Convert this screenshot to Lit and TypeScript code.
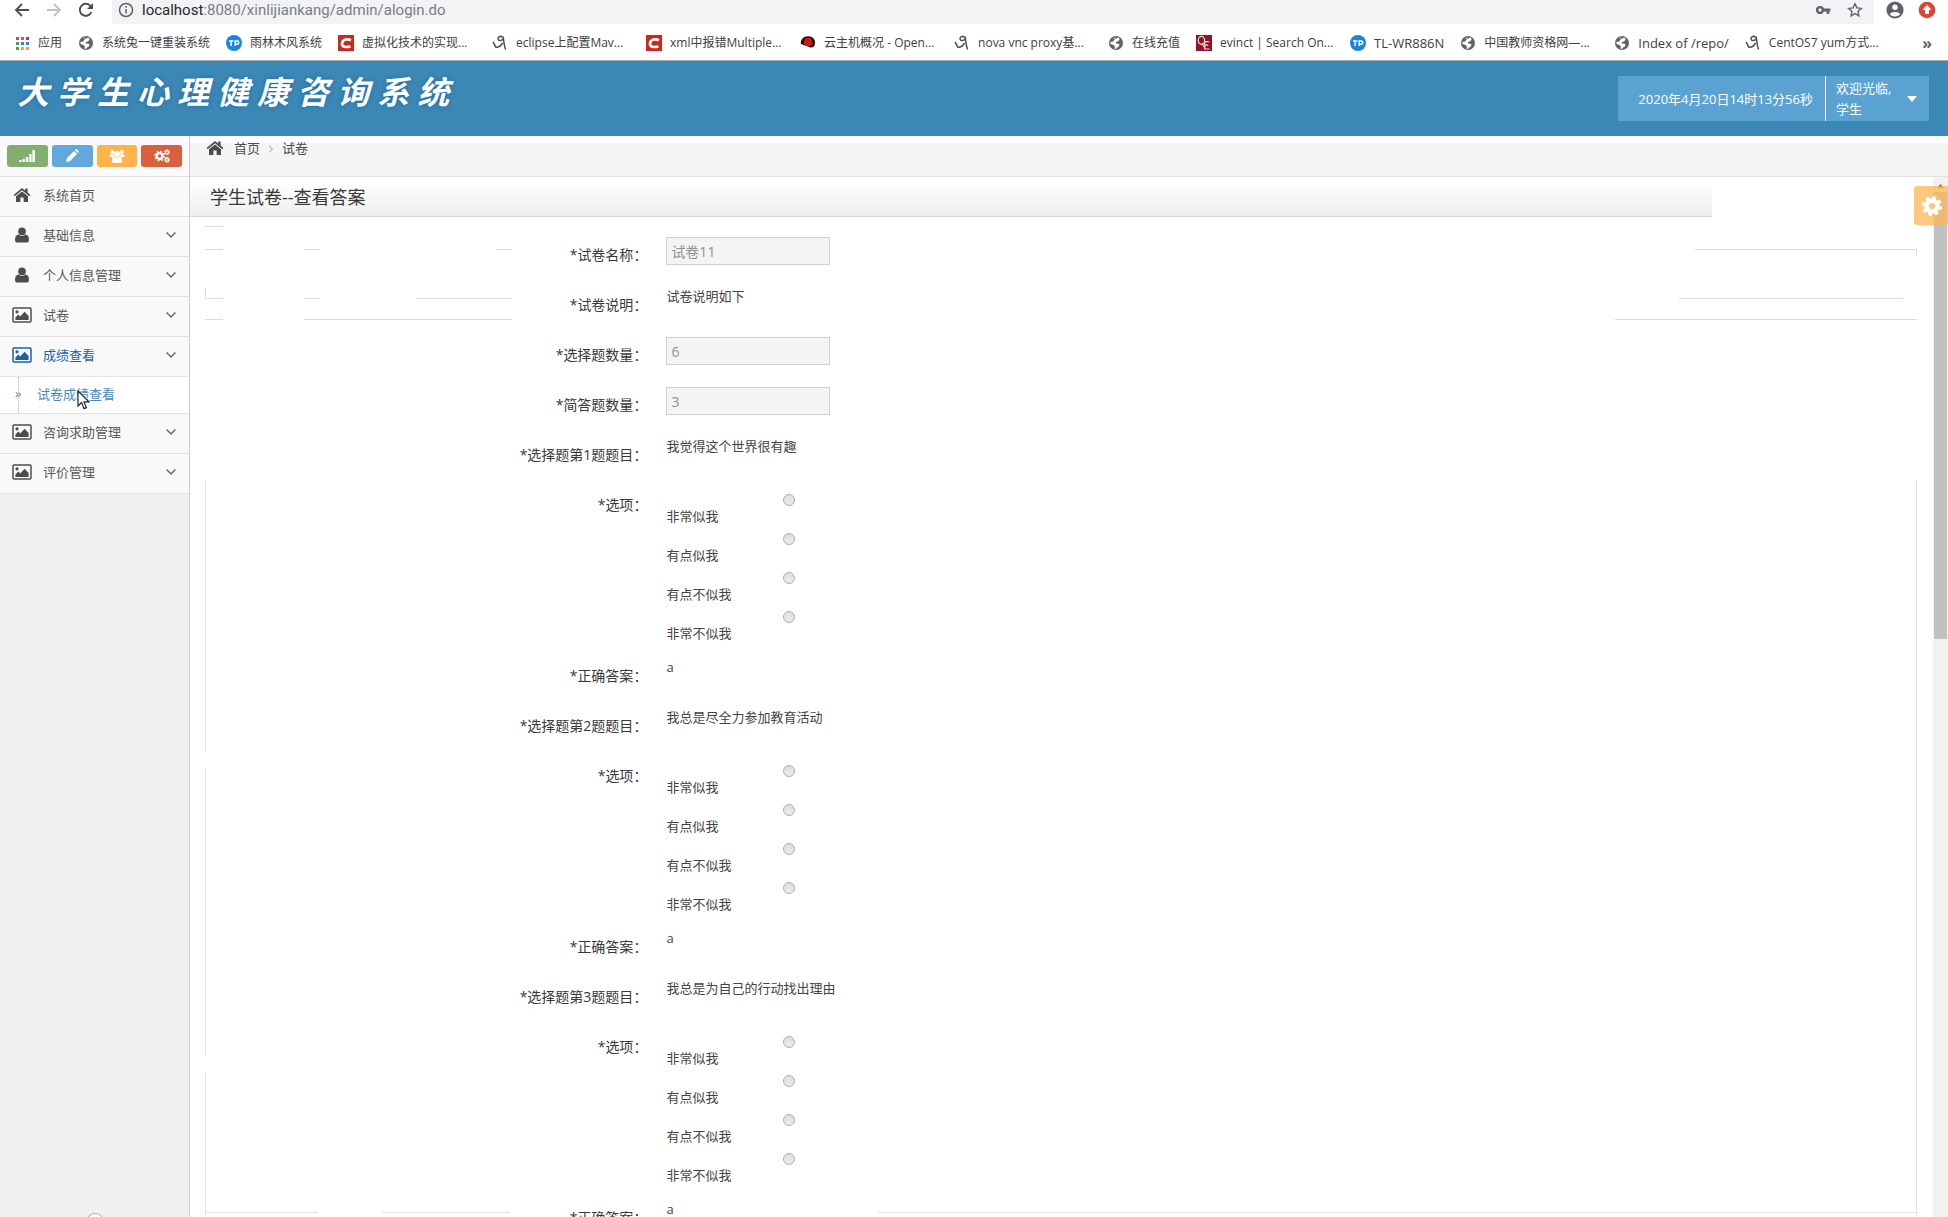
import { LitElement, html, css, svg, nothing, TemplateResult } from "lit";
import { customElement, property } from "lit/decorators.js";
import { classMap } from "lit/directives/class-map.js";

const icons: Record<string, TemplateResult> = {
  apps: html`<svg viewBox="0 0 16 16" width="16" height="16">
    ${[2, 7, 12].map((y, r) =>
      [2, 7, 12].map(
        (x, c) => svg`<rect x=${x} y=${y} width="3" height="3" fill=${
          [["#e0443e", "#d9534f", "#c0392b"], ["#4a9a4a", "#3b7ddd", "#3b7ddd"], ["#4a9a4a", "#f0a830", "#f0a830"]][r][c]
        }></rect>`
      )
    )}
  </svg>`,
  globe: html`<svg viewBox="0 0 16 16" width="16" height="16">
    <circle cx="8" cy="8" r="7" fill="#5f6368"></circle>
    <path d="M2.600 6.400C4 7.400 5.400 6.600 6 5.200 6.600 3.800 8 3.800 9.400 3L11 2.600 11.600 5 9.600 6.400 7.600 7.200 8.400 8.600 11.400 9 11 11.400 8.600 12.800 8 14 6.400 13.600 7 11.400 5 9.800 2.400 9z" fill="#fff"></path>
    <path d="M5 2.600 8 1.600 7.600 3.400 5.600 4.600z" fill="#fff" opacity="0.300"></path>
  </svg>`,
  tp: html`<svg viewBox="0 0 16 16" width="16" height="16">
    <circle cx="8" cy="8" r="8" fill="#1a86e0"></circle>
    <path d="M3 6h4.400M5.200 6v5M9.200 11V6h2a1.600 1.600 0 0 1 0 3.200h-2" fill="none" stroke="#fff" stroke-width="1.500"></path>
  </svg>`,
  cmark: html`<svg viewBox="0 0 16 16" width="16" height="16">
    <rect width="16" height="16" fill="#c92a1c"></rect>
    <path d="M13 5.200C9.600 3.600 4.600 4.200 4 8.300 3.600 12 8.200 12.900 12.400 11.200" fill="none" stroke="#fff" stroke-width="2.600"></path>
  </svg>`,
  sa: html`<svg viewBox="0 0 16 16" width="16" height="16">
    <path d="M1 7c1 1.200 1.600 3.600 3 5.200C6.500 12.600 9 10.500 10.600 8M10.600 2.200C8.600.4 5.600 2 6.200 4.200c.6 2 4 1.800 4.800-.4M11.200 1.600c.4 4.200.8 8.600 2.400 13" fill="none" stroke="#4a4d50" stroke-width="1.500"></path>
  </svg>`,
  hat: html`<svg viewBox="0 0 16 16" width="16" height="16">
    <path d="M1 9C0 4.500 4 1 8.400 1.200 13 1.400 16 5 14.800 9.600 14.400 12 12 13 10.400 12.400z" fill="#111"></path>
    <path d="M3.600 8.200C4 5.400 4.600 2.800 6.600 3c1.400-.6 3.400-.4 4.400.6 1.200 1.600 1.600 4 1.400 6.200C10.400 12.400 5 11 3.600 8.200z" fill="#d8140c"></path>
  </svg>`,
  qe: html`<svg viewBox="0 0 16 16" width="16" height="16">
    <rect width="16" height="16" fill="#8f1626"></rect>
    <ellipse cx="5.400" cy="5.400" rx="3.200" ry="4" fill="none" stroke="#f3dfe1" stroke-width="1.200"></ellipse>
    <path d="M6 8.400 8.200 12M13.200 6.600H8.800v7.400h4.600M8.800 10.200h3.400" fill="none" stroke="#f3dfe1" stroke-width="1.200"></path>
  </svg>`,
  home: html`<svg viewBox="0 0 18 16" width="18" height="16" fill="currentColor">
    <path d="M9 1 .6 8l1 1.200L9 3.200l7.400 6 1-1.200-2.800-2.400V1.600h-2.400v2z"></path>
    <path d="M9 4.400 3 9.200V15h4.400v-4.400h3.200V15H15V9.200z"></path>
  </svg>`,
  user: html`<svg viewBox="0 0 16 16" width="16" height="16" fill="currentColor">
    <circle cx="8" cy="4.400" r="3.800"></circle>
    <path d="M1 13c0-3.400 1.200-5.200 3.600-5.400 2 1.800 4.800 1.800 6.800 0C13.800 7.800 15 9.600 15 13c0 1.600-1 2.600-2.400 2.600H3.400C2 15.600 1 14.600 1 13z"></path>
  </svg>`,
  picture: html`<svg viewBox="0 0 20 16" width="20" height="16">
    <rect x="1" y="1" width="18" height="14" rx="1" fill="none" stroke="currentColor" stroke-width="1.500"></rect>
    <circle cx="5" cy="4.800" r="1.600" fill="currentColor"></circle>
    <path d="M3.400 13v-2.400L6.400 7.600l1.800 1.800 4.400-4.600 4 4.200v4z" fill="currentColor"></path>
  </svg>`,
  chevron: html`<svg viewBox="0 0 10 6" width="10" height="6"><path d="M.6.6 5 5 9.400.6" fill="none" stroke="#666" stroke-width="1.400"></path></svg>`,
  signal: html`<svg viewBox="0 0 16 14" width="16" height="14" fill="currentColor"><path d="M0 11h2.400v2H0zM3.400 10h2.400v3H3.400zM6.800 8h2.400v5H6.800zM10.200 5h2.400v8h-2.400zM13.400 1h2.400v12h-2.400z"></path></svg>`,
  pencil: html`<svg viewBox="0 0 14 14" width="14" height="14" fill="currentColor"><path d="M1 13l.8-3.800L9 2l3 3-7.200 7.200zM9.800 1.200 10.600.6c.6-.5 1.200-.4 1.700.1l1 1c.5.5.5 1.100 0 1.700l-.6.700z"></path></svg>`,
  group: html`<svg viewBox="0 0 16 14" width="16" height="14" fill="currentColor">
    <circle cx="3.400" cy="3" r="2"></circle><circle cx="12.600" cy="3" r="2"></circle><circle cx="8" cy="5" r="3"></circle>
    <path d="M.2 8C.2 6 1 5.200 2 5.200h2.400L5 8zM15.800 8c0-2-.8-2.800-1.800-2.800h-2.400L11 8zM2.800 12c0-3 1-4.400 2.800-4.400 1.400 1.200 3.400 1.200 4.800 0 1.800 0 2.800 1.400 2.800 4.400 0 1.200-.8 2-2 2H4.800c-1.200 0-2-.8-2-2z"></path>
  </svg>`,
  cogs: html`<svg viewBox="0 0 16 14" width="16" height="14" fill="none" stroke="currentColor">
    <circle cx="5.600" cy="7" r="2.900" stroke-width="2.200"></circle><circle cx="5.600" cy="7" r="4.700" stroke-width="1.400" stroke-dasharray="1.900 1.790"></circle>
    <circle cx="13" cy="3.200" r="1.600" stroke-width="1.400"></circle><circle cx="13" cy="3.200" r="2.500" stroke-width="1" stroke-dasharray="1 .96"></circle>
    <circle cx="13" cy="10.800" r="1.600" stroke-width="1.400"></circle><circle cx="13" cy="10.800" r="2.500" stroke-width="1" stroke-dasharray="1 .96"></circle>
  </svg>`,
  cog: html`<svg viewBox="0 0 22 22" width="22" height="22" fill="none" stroke="#fff">
    <circle cx="11" cy="11" r="5.400" stroke-width="4.600"></circle><circle cx="11" cy="11" r="8.800" stroke-width="2.600" stroke-dasharray="3.900 3.010"></circle>
  </svg>`,
};

interface Bookmark { icon: string; text: string; wide?: boolean; latin?: boolean }
const bookmarks: Bookmark[] = [
  { icon: "apps", text: "应用" },
  { icon: "globe", text: "系统兔一键重装系统" },
  { icon: "tp", text: "雨林木风系统" },
  { icon: "cmark", text: "虚拟化技术的实现...", wide: true },
  { icon: "sa", text: "eclipse上配置Mav...", wide: true },
  { icon: "cmark", text: "xml中报错Multiple...", wide: true },
  { icon: "hat", text: "云主机概况 - Open...", wide: true },
  { icon: "sa", text: "nova vnc proxy基...", wide: true },
  { icon: "globe", text: "在线充值" },
  { icon: "qe", text: "evinct | Search On...", wide: true },
  { icon: "tp", text: "TL-WR886N", latin: true },
  { icon: "globe", text: "中国教师资格网—...", wide: true },
  { icon: "globe", text: "Index of /repo/", latin: true },
  { icon: "sa", text: "CentOS7 yum方式...", wide: true },
];

interface MenuEntry { icon: string; text: string; plain?: boolean; child?: string }
const menu: MenuEntry[] = [
  { icon: "home", text: "系统首页", plain: true },
  { icon: "user", text: "基础信息" },
  { icon: "user", text: "个人信息管理" },
  { icon: "picture", text: "试卷" },
  { icon: "picture", text: "成绩查看", child: "试卷成绩查看" },
  { icon: "picture", text: "咨询求助管理" },
  { icon: "picture", text: "评价管理" },
];

const choices = ["非常似我", "有点似我", "有点不似我", "非常不似我"];
const questions = [
  { title: "我觉得这个世界很有趣", answer: "a" },
  { title: "我总是尽全力参加教育活动", answer: "a" },
  { title: "我总是为自己的行动找出理由", answer: "a" },
];

const base = css`
  * { box-sizing: border-box; }
  svg { display: block; flex: none; }
  a { color: inherit; text-decoration: none; }
  button { font: inherit; color: inherit; border: 0; padding: 0; background: none; }
`;

@customElement("browser-bar")
export class BrowserBar extends LitElement {
  static styles = [base, css`
    :host { display: block; background: #fff; color: #3c4043; border-bottom: 1px solid #a3a9ad; }
    .address { display: flex; align-items: flex-start; height: 24px; }
    .nav { display: flex; gap: 16px; padding: 2px 0 0 14px; width: 112px; color: #4a4d51; }
    .field { flex: 1; display: flex; height: 24px; padding: 0 11px 0 6px; background: #f1f3f4; gap: 8px; align-items: flex-start; }
    .field svg { margin-top: 2px; }
    .url { flex: 1; min-width: 0; color: #7a7e82; font-family: Roboto, sans-serif; font-size: 15px; line-height: 20px; }
    .url b { font-weight: 400; color: #26282b; }
    .keys { display: flex; gap: 16px; }
    .profile { display: flex; gap: 14px; padding: 1px 12px 0 12px; }
    .marks { display: flex; align-items: center; height: 36px; padding: 2px 16px 0 14px; font-size: 12px; line-height: 20px; }
    .mark { display: flex; align-items: center; gap: 8px; padding-right: 16px; white-space: nowrap; flex: none; }
    .wide { width: 154px; }
    .latin { font-size: 13px; }
    .more { margin-left: auto; font-size: 16px; font-weight: 700; line-height: 20px; color: #5f6368; }
  `];
  render() {
    return html`
      <div class="address">
        <div class="nav">
          <button aria-label="后退"><svg viewBox="0 0 16 16" width="16" height="16"><path d="M15 8H2M8 2 2 8l6 6" fill="none" stroke="currentColor" stroke-width="1.800"></path></svg></button>
          <button aria-label="前进"><svg viewBox="0 0 16 16" width="16" height="16"><path d="M1 8h13M8 2l6 6-6 6" fill="none" stroke="#bdc1c6" stroke-width="1.800"></path></svg></button>
          <button aria-label="刷新"><svg viewBox="0 0 16 16" width="16" height="16"><path d="M13.400 10A6 6 0 1 1 12.600 4.200" fill="none" stroke="currentColor" stroke-width="1.900"></path><path d="M15 1v6H9z" fill="currentColor"></path></svg></button>
        </div>
        <div class="field">
          <svg viewBox="0 0 16 16" width="16" height="16" fill="none" stroke="#5f6368" stroke-width="1.500"><circle cx="8" cy="8" r="6.500"></circle><path d="M8 7v4.500M8 4v1.700"></path></svg>
          <div class="url"><b>localhost</b>:8080/xinlijiankang/admin/alogin.do</div>
          <div class="keys">
            <svg viewBox="0 0 16 16" width="16" height="16"><circle cx="5" cy="8" r="2.900" fill="none" stroke="#5f6368" stroke-width="2.400"></circle><path d="M8 6.600h7.400v3h-1.200V12h-2.600V9.600H8z" fill="#5f6368"></path></svg>
            <svg viewBox="0 0 16 16" width="16" height="16"><path d="m8 1.800 1.900 4.100 4.400.5-3.300 3 .9 4.400L8 11.600l-3.900 2.200.9-4.400-3.300-3 4.400-.5z" fill="none" stroke="#5f6368" stroke-width="1.400"></path></svg>
          </div>
        </div>
        <div class="profile">
          <svg viewBox="0 0 18 18" width="18" height="18"><circle cx="9" cy="9" r="8.600" fill="#5f6368"></circle><circle cx="9" cy="6.300" r="2.700" fill="#fff"></circle><path d="M3.800 13.200c1.600-3 8.800-3 10.400 0-2.400 3-8 3-10.400 0z" fill="#fff"></path></svg>
          <svg viewBox="0 0 18 18" width="18" height="18"><circle cx="9" cy="9" r="8.300" fill="#db4437"></circle><path d="M9 3.800 13.600 9H11v4H7V9H4.400z" fill="#fff"></path></svg>
        </div>
      </div>
      <nav class="marks">
        ${bookmarks.map((b) => html`<a href="#" class=${classMap({ mark: true, wide: !!b.wide, latin: !!b.latin })}>${icons[b.icon]}<span>${b.text}</span></a>`)}
        <button class="more" aria-label="更多书签">»</button>
      </nav>`;
  }
}

@customElement("site-header")
export class SiteHeader extends LitElement {
  static styles = [base, css`
    :host { display: flex; justify-content: space-between; align-items: flex-start; height: 75px; padding: 0 19px 0 17px; background: #3b87b5; color: #fff; }
    .brand { display: flex; gap: 8px; margin: 0; padding-top: 9px; font-size: 32px; line-height: 44px; font-weight: 700; font-style: italic; text-shadow: 0 0 4px #1c6aa8; }
    .info { display: flex; margin-top: 15px; height: 45px; background: #5aa2d2; }
    .time { padding: 0 12px 0 20px; border-right: 1px solid #fff; font-size: 13px; line-height: 46px; }
    .who { display: flex; align-items: center; gap: 16px; padding: 0 14px 0 10px; font-size: 13px; line-height: 21px; text-align: left; width: 103px; justify-content: space-between; }
    .who span { white-space: nowrap; }
  `];
  render() {
    return html`
      <h1 class="brand">${[..."大学生心理健康咨询系统"].map((c) => html`<span>${c}</span>`)}</h1>
      <div class="info">
        <div class="time">2020年4月20日14时13分56秒</div>
        <button class="who"><span>欢迎光临,<br />学生</span>
          <svg viewBox="0 0 10 6" width="10" height="6"><path d="M0 0h10L5 6z" fill="#fff"></path></svg>
        </button>
      </div>`;
  }
}

@customElement("side-menu")
export class SideMenu extends LitElement {
  static styles = [base, css`
    :host { display: flex; flex-direction: column; width: 190px; box-sizing: border-box; background: #f0f0f0; border-right: 1px solid #ccc; color: #585858; font-size: 13px; overflow: hidden; }
    .quick { display: grid; grid-template-columns: repeat(4, 1fr); gap: 4px; padding: 9px 7px; height: 40px; background: #fafafa; color: #fff; }
    .quick button { display: grid; place-items: center; height: 22px; border-radius: 3px; }
    .green { background: #82af6f; }
    .blue { background: #62a8dc; }
    .orange { background: #ffb44b; }
    .red { background: #d8603d; }
    ul { list-style: none; margin: 0; padding: 0; border-bottom: 1px solid #e5e5e5; }
    .item { display: flex; align-items: center; height: 40px; padding: 0 13px 4px 12px; border-top: 1px solid #e0e0e0; background: #f9f9f9; }
    .icon { display: grid; place-items: center; width: 20px; margin-right: 11px; color: #4d4d4d; }
    .item span:nth-child(2) { flex: 1; }
    .open { color: #1963aa; }
    .open .icon { color: #1963aa; }
    .child { position: relative; display: flex; align-items: center; height: 37px; padding: 0 0 4px 15px; background: #fff; border-top: 1px solid #e5e5e5; color: #4b88b7; }
    .child i { width: 22px; font-style: normal; color: #808080; }
    .child::before { content: ""; position: absolute; left: 18px; top: 0; bottom: 0; border-left: 1px dotted #b5b5b5; }
    .pointer { position: absolute; left: 77px; top: 13px; z-index: 2; }
    .toggle { align-self: center; margin-top: auto; margin-bottom: -14px; width: 18px; height: 18px; flex: none; border: 1px solid #aaa; border-radius: 50%; background: #fff; }
  `];
  render() {
    return html`
      <div class="quick">
        <button class="green" aria-label="统计">${icons.signal}</button>
        <button class="blue" aria-label="编辑">${icons.pencil}</button>
        <button class="orange" aria-label="用户">${icons.group}</button>
        <button class="red" aria-label="设置">${icons.cogs}</button>
      </div>
      <ul>
        ${menu.map((m) => html`<li>
          <a href="#" class=${classMap({ item: true, open: !!m.child })}>
            <span class="icon">${icons[m.icon]}</span><span>${m.text}</span>${m.plain ? nothing : icons.chevron}
          </a>
          ${m.child
            ? html`<a href="#" class="child"><i>»</i>${m.child}
                <svg class="pointer" viewBox="0 0 13 20" width="13" height="20"><path d="M1 1v15l3.600-3.400L7 18.600l2.400-1L7 11.800h5z" fill="#fff" stroke="#222" stroke-width="1.200"></path></svg></a>`
            : nothing}
        </li>`)}
      </ul>
      <button class="toggle" aria-label="折叠菜单"></button>`;
  }
}

@customElement("form-row")
export class FormRow extends LitElement {
  @property() label = "";
  @property() value = "";
  @property() kind: "text" | "field" | "choices" = "text";
  @property() group = "";
  static styles = [base, css`
    :host { display: grid; grid-template-columns: 26% 1fr; column-gap: 16px; min-height: 35px; align-items: start; }
    .label { padding: 8px 3px 0 0; text-align: right; font-size: 14px; line-height: 20px; color: #393939; white-space: nowrap; }
    .text { font-size: 13px; line-height: 19px; color: #444; }
    .field { width: 164px; height: 28px; padding: 0 4px; border: 1px solid #d0d0d0; border-radius: 0; background: #f4f4f4; color: #939192; font: inherit; font-size: 14px; line-height: 20px; }
    .choices { margin: 0; padding: 0; border: 0; }
    .choice { display: grid; grid-template-columns: 117px auto; grid-template-rows: 20px 19px; justify-content: start; font-size: 13px; line-height: 18px; color: #444; }
    .choice input { grid-area: 1 / 2; appearance: none; width: 12px; height: 12px; margin: 7px 0 0; border: 1px solid #adadad; border-radius: 50%; background: linear-gradient(#dedede, #ececec); }
    .choice span { grid-area: 2 / 1; }
  `];
  render() {
    return html`
      <label class="label" for="control">*${this.label}：</label>
      ${this.kind === "field"
        ? html`<input id="control" class="field" disabled .value=${this.value} />`
        : this.kind === "choices"
          ? html`<fieldset id="control" class="choices" aria-label=${this.label}>
              ${choices.map((c) => html`<label class="choice"><input type="radio" name=${this.group} /><span>${c}</span></label>`)}
            </fieldset>`
          : html`<output id="control" class="text">${this.value}</output>`}`;
  }
}

@customElement("paper-view")
export class PaperView extends LitElement {
  static styles = [base, css`
    :host { position: relative; display: flex; flex-direction: column; min-width: 0; min-height: 0; overflow: hidden; background: #fff; color: #393939; }
    .crumbs { display: flex; flex: none; align-items: flex-start; height: 41px; padding: 4px 0 0 16px; background: linear-gradient(#fcfcfc 7px, #f5f5f5 7px); border-bottom: 1px solid #e2e2e2; font-size: 13px; line-height: 16px; color: #4c4c4c; }
    .crumbs a { display: flex; gap: 10px; }
    .sep { width: 22px; display: grid; place-items: center; height: 18px; }
    .frame { flex: 1; min-height: 0; display: flex; }
    .page { position: relative; flex: 1; min-width: 0; overflow: hidden; }
    .title { margin: 0 221px 20px 0; padding: 6px 0 5px 20px; font-size: 18px; font-weight: 400; line-height: 28px; background: linear-gradient(#fff 10%, #eee); border-bottom: 1px solid #d5d5d5; }
    form { display: flex; flex-direction: column; gap: 15px; padding: 0 15px; }
    .rules { position: absolute; top: 0; fill: #dcdcdc; }
    .left { left: 15px; }
    .right { right: 16px; }
    .edge { position: absolute; top: 303px; bottom: 0; width: 1px; background: #e4e4e4; }
    .edge.left { background: linear-gradient(#e4e4e4 272px, #fff 272px, #fff 288px, #e4e4e4 288px, #e4e4e4 576px, #fff 576px, #fff 592px, #e4e4e4 592px); }
    .foot { position: absolute; bottom: 4px; left: 15px; right: 15px; display: flex; height: 1px; }
    .foot i { background: #e4e4e4; }
    .track { width: 15px; background: #f1f1f1; display: flex; flex-direction: column; align-items: center; }
    .thumb { width: 13px; height: 43%; background: #c1c1c1; }
    .track svg { margin: 7px 0 4px; }
    .settings { position: absolute; right: 0; top: 50px; width: 34px; height: 39px; padding-left: 7px; border-radius: 3px 0 0 3px; background: #ffb752c0; }
    .foot i:nth-child(1) { width: 113px; margin-right: 64px; }
    .foot i:nth-child(2) { width: 128px; margin-right: 368px; }
    .foot i:nth-child(3) { flex: 1; }
  `];
  render() {
    return html`
      <nav class="crumbs">
        <a href="#">${icons.home}<span>首页</span></a>
        <span class="sep"><svg viewBox="0 0 6 8" width="6" height="8"><path d="M1 .6 4.400 4 1 7.400" fill="none" stroke="#b8b8b8" stroke-width="1.200"></path></svg></span>
        <span>试卷</span>
      </nav>
      <div class="frame">
        <div class="page">
          <h2 class="title">学生试卷--查看答案</h2>
          <form>
            <form-row kind="field" label="试卷名称" value="试卷11"></form-row>
            <form-row label="试卷说明" value="试卷说明如下"></form-row>
            <form-row kind="field" label="选择题数量" value="6"></form-row>
            <form-row kind="field" label="简答题数量" value="3"></form-row>
            ${questions.map((q, i) => html`
              <form-row label=${`选择题第${i + 1}题题目`} value=${q.title}></form-row>
              <form-row kind="choices" label="选项" group=${`q${i + 1}`}></form-row>
              <form-row label="正确答案" value=${q.answer}></form-row>`)}
          </form>
          <svg class="rules left" width="308" height="160" aria-hidden="true">
            <path d="M0 49h18v1H0zM0 72h18v1H0zM99 72h16v1H99zM291 72h16v1H291zM0 111h1v11H0zM2 121h16v1H2zM99 121h16v1H99zM211 121h96v1H211zM0 142h18v1H0zM99 142h208v1H99z"></path>
          </svg>
          <svg class="rules right" width="302" height="160" aria-hidden="true">
            <path d="M80 72h222v7h-1v-6H80zM64 121h224v1H64zM0 142h302v1H0z"></path>
          </svg>
          <i class="edge left"></i><i class="edge right"></i>
          <div class="foot"><i></i><i></i><i></i></div>
        </div>
        <div class="track">
          <svg viewBox="0 0 7 4" width="7" height="4"><path d="M0 4h7L3.500 0z" fill="#707070"></path></svg>
          <div class="thumb"></div>
        </div>
      </div>
      <button class="settings" aria-label="页面设置">${icons.cog}</button>`;
  }
}

@customElement("app-root")
export class AppRoot extends LitElement {
  static styles = css`
    :host { display: flex; flex-direction: column; height: 100vh; overflow: hidden; font-family: "Open Sans", "Noto Sans CJK SC", sans-serif; }
    .body { flex: 1; min-height: 0; display: grid; grid-template-columns: auto 1fr; grid-template-rows: minmax(0, 1fr); }
  `;
  render() {
    return html`
      <browser-bar></browser-bar>
      <site-header></site-header>
      <div class="body"><side-menu></side-menu><paper-view></paper-view></div>`;
  }
}
